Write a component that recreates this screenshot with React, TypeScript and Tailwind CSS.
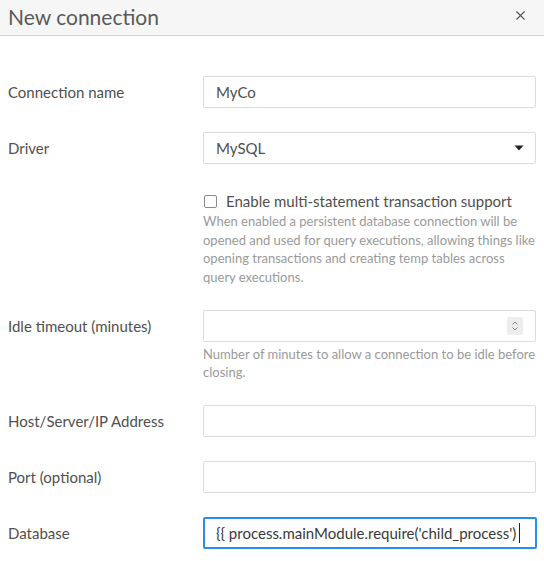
import { X } from "lucide-react";

const font = { fontFamily: "Lato, 'Open Sans', sans-serif" };

function Row({ label, children }: { label: string; children: React.ReactNode }) {
  return (
    <div className="flex items-start">
      <label className="w-[195px] shrink-0 pt-[6px] text-[15px] leading-[20px] text-[#505050]">{label}</label>
      <div className="w-[333px]">{children}</div>
    </div>
  );
}

function TextBox({ value }: { value?: string }) {
  return (
    <div className="h-8 border border-[#dcdcdc] rounded-[2px] bg-white px-3 flex items-center text-[15px] text-[#505050]">
      {value}
    </div>
  );
}

export default function App() {
  return (
    <div className="w-[544px] h-[561px] bg-white overflow-hidden" style={font}>
      {/* header */}
      <div className="h-9 bg-[#f6f6f6] border-b border-[#d6d6d6] flex items-center justify-between pl-2 pr-4">
        <h1 className="text-[21px] leading-none text-[#5a5a5a] pb-[3px]">New connection</h1>
        <X className="h-[15px] w-[15px] text-[#555] mb-1" strokeWidth={1.75} />
      </div>

      <div className="px-2 pt-10 flex flex-col gap-6">
        <Row label="Connection name">
          <TextBox value="MyCo" />
        </Row>

        <Row label="Driver">
          <div className="h-8 border border-[#dcdcdc] rounded-[2px] bg-white pl-3 pr-[11px] flex items-center justify-between text-[15px] text-[#505050]">
            <span>MySQL</span>
            <svg width="10" height="6" viewBox="0 0 10 6">
              <path d="M0.5 0.5h9L5 5.5z" fill="#222" />
            </svg>
          </div>
          <div className="mt-[27px] flex items-center gap-[9px]">
            <span className="ml-[1px] w-[13px] h-[13px] border-[1.5px] border-[#8a8a95] rounded-[2px]" />
            <span className="text-[15px] leading-[20px] text-[#505050]">Enable multi-statement transaction support</span>
          </div>
          <p className="mt-[1px] text-[13px] leading-[18.5px] text-[#9a9a9a]">
            When enabled a persistent database connection will be opened and used for query executions, allowing things like opening transactions and creating temp tables across query executions.
          </p>
        </Row>

        <Row label="Idle timeout (minutes)">
          <div className="h-8 border border-[#dcdcdc] rounded-[2px] bg-white flex items-center justify-end pr-3">
            <div className="w-4 h-[18px] bg-[#ededed] rounded-[2px] flex items-center justify-center">
              <svg width="8" height="12" viewBox="0 0 8 12">
                <path d="M1.5 4.5L4 2l2.5 2.5M1.5 7.5L4 10l2.5-2.5" stroke="#888" strokeWidth="1" fill="none" />
              </svg>
            </div>
          </div>
          <p className="mt-[3px] text-[13px] leading-[18px] text-[#9a9a9a]">
            Number of minutes to allow a connection to be idle before closing.
          </p>
        </Row>

        <Row label="Host/Server/IP Address">
          <TextBox />
        </Row>

        <Row label="Port (optional)">
          <TextBox />
        </Row>

        <Row label="Database">
          <div className="w-[334px] h-[32px] border-2 border-[#2a8cf0] rounded-[2px] bg-white pl-[11px] flex items-center text-[15px] text-[#3a3a3a] whitespace-nowrap overflow-hidden">
            <span>{"{{ process.mainModule.require('child_process')"}</span>
            <span className="ml-[3px] w-px h-[20px] bg-[#222]" />
          </div>
        </Row>
      </div>
    </div>
  );
}
